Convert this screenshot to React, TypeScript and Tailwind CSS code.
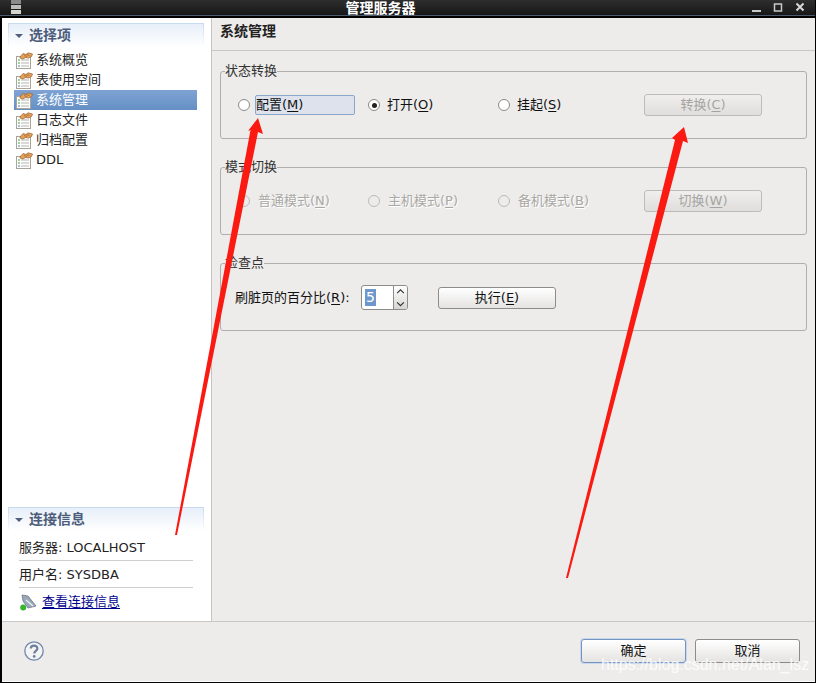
const font = '[font-family:"DejaVu_Sans","Noto_Sans_CJK_SC",sans-serif]';

function PageIcon() {
  return (
    <svg width="17" height="17" viewBox="0 0 17 17" className="shrink-0">
      <rect x="0.5" y="4.5" width="14" height="12" fill="#fdfdfb" stroke="#a9a49a" />
      <path d="M2 8h2M2 11h2" stroke="#3fa34d" strokeWidth="1" />
      <path d="M5 8h8M5 11h8M5 14h8" stroke="#b5b5b5" strokeWidth="1" />
      <path d="M2 14h2" stroke="#4a7bd0" strokeWidth="1" />
      <path d="M4 5 7 1.5 10 2.5 12 .8 16.5 2 15.5 4.5 12.5 6 9.5 5.5 7 7 4 6Z" fill="#e2a15d" stroke="#9c5f2a" strokeWidth="0.7" />
      <path d="M8 3.5 11 4.5M10.5 2.5 13.5 3.5" stroke="#9c5f2a" strokeWidth="0.7" />
    </svg>
  );
}

function SectionHeader({ title }: { title: string }) {
  return (
    <div className="flex h-[24px] items-center gap-[6px] rounded-t-[3px] border-x border-t border-[#c6d9f0] bg-gradient-to-b from-[#e7eff9] to-white pl-[6px] [border-image:linear-gradient(#c6d9f0,#ffffff)_1]">
      <span className="h-0 w-0 border-x-[4px] border-t-[4px] border-x-transparent border-t-[#4f5f7d]" />
      <span className="text-[14px] font-bold text-[#4c5c7a]">{title}</span>
    </div>
  );
}

function NavItem({ label, active }: { label: string; active?: boolean }) {
  return (
    <div
      className={
        'flex h-5 items-center gap-[3px] pl-[2px] text-[13px] ' +
        (active ? 'bg-gradient-to-b from-[#7ea3d3] to-[#6590c5] text-white' : 'text-[#222]')
      }
    >
      <PageIcon />
      <span>{label}</span>
    </div>
  );
}

function Radio({ checked, disabled }: { checked?: boolean; disabled?: boolean }) {
  return (
    <span
      className={
        'flex h-[12px] w-[12px] shrink-0 items-center justify-center rounded-full border ' +
        (disabled ? 'border-[#bdbbb8] bg-[#edecea]' : 'border-[#8a8a88] bg-white')
      }
    >
      {checked && <span className="h-[5px] w-[5px] rounded-full bg-[#222]" />}
    </span>
  );
}

function Mnemonic({ text, k }: { text: string; k: string }) {
  return (
    <>
      {text}(<span className="underline underline-offset-2">{k}</span>)
    </>
  );
}

function RadioCell({ text, k, checked, disabled }: { text: string; k: string; checked?: boolean; disabled?: boolean }) {
  return (
    <div className={'flex items-center ' + (disabled ? 'gap-[8px]' : 'gap-[7px]')}>
      <Radio checked={checked} disabled={disabled} />
      <span className={'text-[13px] ' + (disabled ? 'text-[#a9a8a5] [text-shadow:1px_1px_0_#fff]' : 'text-[#111]')}>
        <Mnemonic text={text} k={k} />
      </span>
    </div>
  );
}

function GrayButton({ text, k }: { text: string; k: string }) {
  return (
    <div className="flex h-[22px] w-[118px] items-center justify-center rounded-[3px] border border-[#bdbcba] bg-gradient-to-b from-[#f0efed] to-[#dfdedc] text-[13px] text-[#a5a4a2]">
      <span>
        <Mnemonic text={text} k={k} />
      </span>
    </div>
  );
}

function Group({ title, children }: { title: string; children: React.ReactNode }) {
  return (
    <fieldset className="mr-[8px] ml-[8px] h-[77px] rounded-[3px] border border-[#b0afad]">
      <legend className="ml-[4px] text-[13px] leading-[18px] text-[#333]">{title}</legend>
      {children}
    </fieldset>
  );
}

function WhiteButton({ label, focused }: { label: React.ReactNode; focused?: boolean }) {
  return (
    <div
      className={
        'flex h-[24px] w-[105px] items-center justify-center rounded-[3px] border bg-gradient-to-b from-white to-[#e4e3e1] text-[13px] text-[#111] ' +
        (focused ? 'border-[#7495c4] shadow-[0_0_0_1px_#c9d7ea]' : 'border-[#8d8c8a]')
      }
    >
      {label}
    </div>
  );
}

export default function App() {
  return (
    <div className={'relative h-[683px] w-[817px] overflow-hidden bg-white ' + font}>
      <div className="flex h-[683px] w-[816px] flex-col border-r border-b border-l-[2px] border-black pb-[1px]">
        {/* title bar */}
        <div className="relative -ml-[2px] flex h-[18px] shrink-0 items-center justify-center border-b-[2px] border-b-black bg-gradient-to-b from-[#2e2e2e] to-[#161616] shadow-[inset_0_-1px_0_#4b5a6b]">
          <span className="ml-[-54px] text-[14px] font-bold text-white">管理服务器</span>
          <svg width="10" height="15" viewBox="0 0 10 15" className="absolute top-0 left-[11px]">
            <rect y="0" width="10" height="4" fill="#8a8a8a" />
            <rect y="5" width="10" height="4" fill="#bcbcbc" />
            <rect y="10" width="10" height="4" fill="#d4d6cf" />
          </svg>
          <svg width="56" height="12" viewBox="0 0 56 12" className="absolute top-[2px] left-[751px]">
            <path d="M1 9h9" stroke="#c9c9c9" strokeWidth="2" />
            <rect x="23.5" y="2" width="7" height="7" fill="none" stroke="#c9c9c9" strokeWidth="1.5" />
            <path d="M45.5 1.5 52.5 8.5M52.5 1.5 45.5 8.5" stroke="#d8d8d8" strokeWidth="2" />
          </svg>
        </div>

        <div className="flex min-h-0 flex-1">
          {/* left pane */}
          <div className="flex w-[210px] shrink-0 flex-col justify-between border-r border-[#c4c4c2] bg-white pt-[5px] pr-[7px] pl-[6px]">
            <div>
              <SectionHeader title="选择项" />
              <div className="mt-[3px] mr-[7px] ml-[6px]">
                <NavItem label="系统概览" />
                <NavItem label="表使用空间" />
                <NavItem label="系统管理" active />
                <NavItem label="日志文件" />
                <NavItem label="归档配置" />
                <NavItem label="DDL" />
              </div>
            </div>
            <div className="pb-[5px]">
              <SectionHeader title="连接信息" />
              <div className="mx-[11px] mt-[2px] text-[13px] text-[#222]">
                <div className="flex h-[28px] items-center border-b border-[#cfcfcf] pt-[2px]">服务器: LOCALHOST</div>
                <div className="flex h-[27px] items-center border-b border-[#cfcfcf] pt-[2px]">用户名: SYSDBA</div>
                <div className="flex h-[28px] items-center gap-[5px] pl-[1px]">
                  <svg width="17" height="17" viewBox="0 0 17 17" className="shrink-0">
                    <path d="M2 1 8 2 16 12 8 14 3 7Z" fill="#9aa8b8" stroke="#5d6b7c" strokeWidth="0.7" />
                    <path d="M6 6 13 12" stroke="#eef2f6" strokeWidth="1.2" />
                    <circle cx="3.2" cy="13.6" r="3" fill="#38b52c" />
                  </svg>
                  <span className="text-[#00008b] underline underline-offset-2">查看连接信息</span>
                </div>
              </div>
            </div>
          </div>

          {/* right pane */}
          <div className="flex-1 bg-[#edecea]">
            <div className="flex h-[33px] items-start border-b border-[#c8c7c5] pt-[3px] pl-[8px] text-[14px] font-bold text-[#222]">
              系统管理
            </div>
            <div className="mt-[11px] flex flex-col gap-[19px]">
              <Group title="状态转换">
                <div className="mt-[14px] grid grid-cols-[130px_130px_146px_118px] items-center pl-[17px]">
                  <div className="flex items-center gap-[5px]">
                    <Radio />
                    <span className="flex h-[20px] w-[100px] items-center rounded-[2px] border border-[#8aa6c9] bg-[#dde2ec] text-[13px] text-[#111]">
                      <span>
                        <Mnemonic text="配置" k="M" />
                      </span>
                    </span>
                  </div>
                  <RadioCell text="打开" k="O" checked />
                  <RadioCell text="挂起" k="S" />
                  <GrayButton text="转换" k="C" />
                </div>
              </Group>
              <Group title="模式切换">
                <div className="mt-[14px] grid grid-cols-[130px_130px_146px_118px] items-center pl-[17px]">
                  <RadioCell text="普通模式" k="N" disabled />
                  <RadioCell text="主机模式" k="P" disabled />
                  <RadioCell text="备机模式" k="B" disabled />
                  <GrayButton text="切换" k="W" />
                </div>
              </Group>
              <Group title="检查点">
                <div className="mt-[13px] flex items-center pl-[14px]">
                  <span className="w-[126px] text-[13px] whitespace-nowrap text-[#111]">
                    <Mnemonic text="刷脏页的百分比" k="R" />:
                  </span>
                  <div className="flex h-[25px] w-[47px] overflow-hidden rounded-[3px] border border-[#8d8c8a] bg-white">
                    <div className="flex flex-1 items-center pl-[3px]">
                      <span className="bg-[#6e98cc] px-[1px] text-[14px] leading-[17px] text-white">5</span>
                    </div>
                    <div className="flex w-[14px] flex-col border-l border-[#8d8c8a] bg-gradient-to-b from-white to-[#d6d5d3]">
                      <svg width="13" height="12" viewBox="0 0 13 12">
                        <path d="M3 7.5 6.5 4 10 7.5" fill="none" stroke="#333" strokeWidth="1.2" />
                      </svg>
                      <svg width="13" height="12" viewBox="0 0 13 12">
                        <path d="M3 4.5 6.5 8 10 4.5" fill="none" stroke="#333" strokeWidth="1.2" />
                      </svg>
                    </div>
                  </div>
                  <div className="ml-[30px] flex h-[22px] w-[118px] items-center justify-center rounded-[3px] border border-[#8d8c8a] bg-gradient-to-b from-white to-[#e4e3e1] text-[13px] text-[#111]">
                    <span>
                      <Mnemonic text="执行" k="E" />
                    </span>
                  </div>
                </div>
              </Group>
            </div>
          </div>
        </div>

        {/* footer */}
        <div className="flex h-[60px] shrink-0 items-center justify-between border-t border-[#c8c7c5] bg-[#edecea] pr-[15px] pl-[22px]">
          <svg width="20" height="20" viewBox="0 0 20 20" className="-mt-[2px]">
            <circle cx="10" cy="10" r="9.2" fill="#f4f4f4" stroke="#6f88ad" strokeWidth="1.3" />
            <path d="M6.8 7.6C6.8 3.6 13.4 3.6 13.4 7.6 13.4 10 10.2 10 10.2 12.6" fill="none" stroke="#6c7f9c" strokeWidth="2.2" />
            <circle cx="10.2" cy="15.4" r="1.4" fill="#6c7f9c" />
          </svg>
          <div className="-mt-[2px] flex gap-[9px]">
            <WhiteButton label="确定" focused />
            <WhiteButton label="取消" />
          </div>
        </div>
      </div>

      {/* annotations drawn over the screenshot */}
      <svg width="817" height="683" viewBox="0 0 817 683" className="pointer-events-none absolute inset-0">
        <polygon points="175,535 250.5,130 248,131 258,118 263,134 258,132 177,535" fill="#fb1a12" />
        <polygon points="566,578 675,140 672,138 684,127 688,143 683,141 568,578" fill="#fb1a12" />
      </svg>
      <div className="pointer-events-none absolute top-[653px] left-[601px] text-[16px] leading-[24px] whitespace-nowrap text-white/80 [font-family:'Liberation_Sans',sans-serif]">
        https://blog.csdn.net/Alan_lsz
      </div>
    </div>
  );
}
